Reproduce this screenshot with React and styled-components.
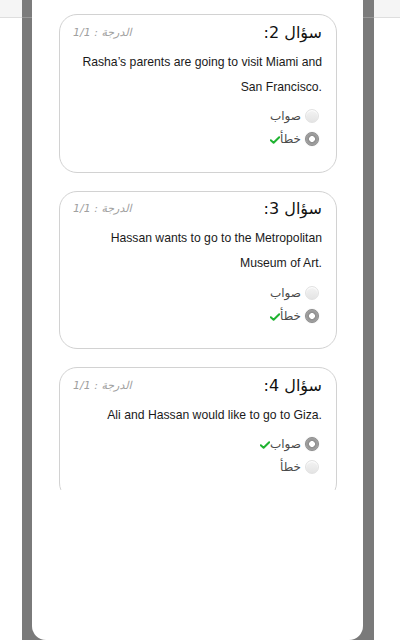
import React from "react";
import styled, { createGlobalStyle } from "styled-components";

const GlobalStyle = createGlobalStyle`
  html, body { margin: 0; padding: 0; background: #ffffff; }
  * { box-sizing: border-box; }
`;

const Page = styled.div`
  width: 400px;
  height: 640px;
  overflow: hidden;
  display: flex;
  padding: 0 26px 0 22px;
  background: linear-gradient(#f5f5f5 0 17px, #dedede 17px 18px, #ffffff 18px);
`;

const Frame = styled.div`
  flex: 1;
  display: flex;
  padding: 0 11px 0 10px;
  background: linear-gradient(#7c7c7c 0 17px, #979797 17px 18px, #7a7a7a 18px);
`;

const Panel = styled.div`
  flex: 1;
  height: 640px;
  background: #ffffff;
  border-radius: 0 0 14px 14px;
  overflow: hidden;
`;

const Scroller = styled.div`
  height: 490px;
  overflow: hidden;
  padding: 14px 26px 0 27px;
  display: flex;
  flex-direction: column;
  gap: 18px;
`;

const Card = styled.div`
  direction: rtl;
  flex: none;
  border: 1px solid #d2d2d2;
  border-radius: 18px;
  padding: 6px 14px 21px 13px;
  background: #fff;
`;

const Head = styled.div`
  display: flex;
  justify-content: space-between;
  align-items: center;
  height: 22px;
`;

const Title = styled.span`
  font-family: "DejaVu Sans", "Noto Sans", sans-serif;
  font-size: 16px;
  color: #111;
`;

const Score = styled.span`
  font-family: "DejaVu Sans", "Noto Sans", sans-serif;
  font-style: italic;
  font-size: 11px;
  color: #a0a0a0;
`;

const Text = styled.p`
  margin: 6.5px 0 0 0;
  direction: ltr;
  text-align: right;
  font-family: "Liberation Sans", Arial, sans-serif;
  font-size: 12.2px;
  line-height: 25px;
  color: #1a1a1a;
`;

const Options = styled.div`
  margin-top: 5px;
  padding-right: 3px;
  display: flex;
  flex-direction: column;
`;

const Option = styled.label`
  display: flex;
  align-items: center;
  gap: 4px;
  height: 23px;
  font-family: "DejaVu Sans", "Noto Sans", sans-serif;
  font-size: 12px;
  color: #4a4a4a;
`;

const Radio = styled.span`
  flex: none;
  width: 14px;
  height: 14px;
  border-radius: 50%;
  background: ${(p) =>
    p.$checked
      ? "radial-gradient(circle, #ffffff 0 2.6px, #8d8d8d 3.2px, #a5a5a5 6px, #8a8a8a 7px)"
      : "linear-gradient(#f3f3f3, #e4e4e4)"};
  border: 1px solid ${(p) => (p.$checked ? "#8a8a8a" : "#e2e2e2")};
  box-shadow: ${(p) => (p.$checked ? "0 0 1px #bbb" : "inset 0 1px 1px #fff")};
`;

const CheckIcon = styled.svg`
  flex: none;
  width: 10px;
  height: 8px;
  margin-right: -4px;
  margin-top: 2px;
`;

function Check() {
  return (
    <CheckIcon viewBox="0 0 10 8">
      <path
        d="M0.8 4.2 L3.6 6.8 L9.2 1.2"
        fill="none"
        stroke="#1fb331"
        strokeWidth="2"
        strokeLinecap="round"
        strokeLinejoin="round"
      />
    </CheckIcon>
  );
}

const questions = [
  {
    n: 2,
    text: "Rasha’s parents are going to visit Miami and San Francisco.",
    answer: "false",
  },
  {
    n: 3,
    text: "Hassan wants to go to the Metropolitan Museum of Art.",
    answer: "false",
  },
  {
    n: 4,
    text: "Ali and Hassan would like to go to Giza.",
    answer: "true",
  },
];

function Question({ q }) {
  const opts = [
    { key: "true", label: "صواب" },
    { key: "false", label: "خطأ" },
  ];
  return (
    <Card>
      <Head>
        <Title>{`سؤال ${q.n}:`}</Title>
        <Score>الدرجة : 1/1</Score>
      </Head>
      <Text>{q.text}</Text>
      <Options>
        {opts.map((o) => (
          <Option key={o.key}>
            <Radio $checked={o.key === q.answer} />
            <span>{o.label}</span>
            {o.key === q.answer && <Check />}
          </Option>
        ))}
      </Options>
    </Card>
  );
}

export default function App() {
  return (
    <>
      <GlobalStyle />
      <Page>
        <Frame>
          <Panel>
            <Scroller>
              {questions.map((q) => (
                <Question key={q.n} q={q} />
              ))}
            </Scroller>
          </Panel>
        </Frame>
      </Page>
    </>
  );
}
